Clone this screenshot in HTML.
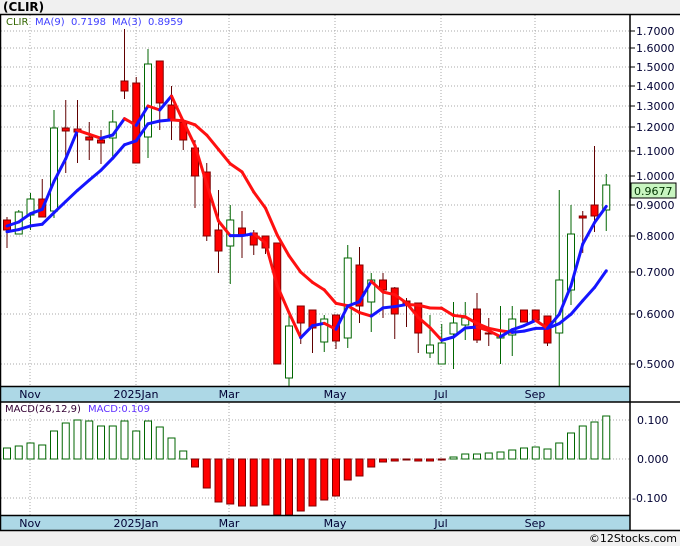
<!DOCTYPE html>
<html><head><meta charset="utf-8"><style>
html,body{margin:0;padding:0;background:#f0f0f0;}
body{width:680px;height:546px;overflow:hidden;position:relative;font-family:"DejaVu Sans","Liberation Sans",sans-serif;}
svg{position:absolute;left:0;top:0;}
</style></head><body>
<svg id="s" width="680" height="546" viewBox="0 0 680 546" xmlns="http://www.w3.org/2000/svg">
<rect x="0" y="14" width="680" height="517" fill="#fff"/>
<text x="3" y="11" font-family="DejaVu Sans,sans-serif" font-weight="bold" font-size="12" fill="#000">(CLIR)</text>
<g id="grid" stroke="#aaa" stroke-dasharray="1,2" stroke-width="1"></g>
<g id="cd"></g>
<g id="ma"></g>
<g id="mb"></g>
<rect x="1" y="387" width="629" height="15" fill="#add8e6"/>
<rect x="1" y="516" width="629" height="14" fill="#add8e6"/>
<g stroke="#000" stroke-width="1.5" fill="none">
<line x1="0" y1="14.5" x2="680" y2="14.5"/>
<line x1="0.5" y1="14" x2="0.5" y2="531"/>
<line x1="630" y1="14" x2="630" y2="531"/>
<line x1="0" y1="386.5" x2="630" y2="386.5"/>
<line x1="0" y1="402" x2="680" y2="402"/>
<line x1="0" y1="515.5" x2="630" y2="515.5"/>
<line x1="0" y1="530.5" x2="680" y2="530.5"/>
</g>
<g id="ax" font-size="11" fill="#000033" font-family="DejaVu Sans,sans-serif"></g>
<g font-size="10" font-family="DejaVu Sans,sans-serif">
<text x="6" y="25" fill="#336600">CLIR</text>
<text x="35" y="25" fill="#4040ff">MA(9)</text>
<text x="71" y="25" fill="#4040ff">0.7198</text>
<text x="112" y="25" fill="#4040ff">MA(3)</text>
<text x="148" y="25" fill="#4040ff">0.8959</text>
<text x="5" y="412" fill="#330033">MACD(26,12,9)</text>
<text x="88" y="412" fill="#6030ff">MACD:0.109</text>
</g>
<rect x="631" y="183" width="45" height="15" fill="#c8f5c0" stroke="#000"/>
<text x="634" y="195" font-size="11" fill="#003300" font-family="DejaVu Sans,sans-serif">0.9677</text>
<text x="677" y="542" font-size="11" text-anchor="end" fill="#000" font-family="DejaVu Sans,sans-serif">©12Stocks.com</text>
</svg>
<script>
var NS="http://www.w3.org/2000/svg";
function el(p,t,a){var e=document.createElementNS(NS,t);for(var k in a)e.setAttribute(k,a[k]);document.getElementById(p).appendChild(e);return e;}
var vx=[30,136,229,335,441,535];
vx.forEach(function(x){el('grid','line',{x1:x,y1:15,x2:x,y2:386});el('grid','line',{x1:x,y1:403,x2:x,y2:515});});
var py=[[1.7,31],[1.6,48],[1.5,67],[1.4,86],[1.3,106],[1.2,127],[1.1,151],[1.0,176],[0.9,205],[0.8,236],[0.7,272],[0.6,314],[0.5,364]];
py.forEach(function(p){el('grid','line',{x1:1,y1:p[1],x2:630,y2:p[1]});
 var t=el('ax','text',{x:636,y:p[1]+4});t.textContent=p[0].toFixed(4);
 el('ax','line',{x1:630,y1:p[1],x2:635,y2:p[1],stroke:'#000'});});
[[0.1,420],[0,459],[-0.1,498]].forEach(function(p){el('grid','line',{x1:1,y1:p[1],x2:630,y2:p[1]});
 var t=el('ax','text',{x:p[0]<0?632:637,y:p[1]+4});t.textContent=p[0].toFixed(3);});
var lab=[["Nov",30],["2025Jan",136],["Mar",229],["May",335],["Jul",441],["Sep",535]];
lab.forEach(function(l){[398,527].forEach(function(y){var t=el('ax','text',{x:l[1],y:y,'text-anchor':'middle'});t.textContent=l[0];});});
var C=[[220,230,217,248,0],[212,234,210,234,1],[199,215,193,230,1],[199,217,179,217,0],[128,211,110,218,1],[128,131,100,173,0],[129,132,100,163,0],[137,140,122,160,0],[140,143,130,164,0],[122,138,110,158,1],[81,91,29,99,0],[83,163,77,163,0],[64,137,49,158,1],[61,103,61,130,0],[105,121,86,140,0],[122,140,119,150,0],[148,176,140,208,0],[172,236,163,241,0],[230,251,190,273,0],[220,246,205,284,1],[228,236,211,258,0],[233,245,230,255,0],[236,248,236,254,0],[243,364,243,364,0],[326,378,310,386,1],[306,323,306,344,0],[310,328,310,353,0],[319,342,315,352,1],[315,341,315,349,0],[258,338,245,348,1],[265,306,247,323,0],[280,302,273,332,1],[280,290,273,318,0],[288,314,287,339,0],[301,305,298,327,0],[303,333,303,353,0],[345,353,315,358,1],[343,364,324,364,1],[323,334,302,369,1],[318,325,302,340,1],[309,340,293,343,0],[333,334,318,346,0],[336,338,306,364,1],[319,335,306,356,1],[310,322,310,322,0],[310,320,310,320,0],[316,343,316,346,0],[280,333,190,386,1],[234,290,205,305,1],[216,218,211,253,0],[205,216,146,232,0],[185,210,174,231,1]];
var X=function(i){return 7+11.75*i;};
C.forEach(function(c,i){var x=X(i);
 el('cd','line',{x1:x,y1:c[2],x2:x,y2:c[3],stroke:c[4]?'#006600':'#600000','stroke-width':1});
 var h=Math.max(1,c[1]-c[0]);
 el('cd','rect',{x:x-3.5,y:c[0],width:7,height:h,fill:c[4]?'#fff':'#ff0000',stroke:c[4]?'#006600':'#800000','stroke-width':1});});
var cl=C.map(function(c){return c[4]?c[0]:c[1];});
function ma(n,pad){var r=[];for(var i=0;i<cl.length;i++){var s=0;for(var j=i-n+1;j<=i;j++)s+=(j<0?pad:cl[j]);r.push(s/n);}return r;}
[ma(9,232),ma(3,224)].forEach(function(m){for(var i=1;i<m.length;i++){
 el('ma','line',{x1:X(i-1),y1:m[i-1],x2:X(i),y2:m[i],stroke:m[i]<=m[i-1]?'#1515ff':'#ff1010','stroke-width':3,'stroke-linecap':'round'});}});
var M=[448,446,443,445,431,423,420,421,426,426,421,431,421,427,438,451,467,488,502,504,506,506,505,515,515,511,506,500,496,480,476,467,462,461,460,461,461,460,457,454,454,453,452,450,448,447,449,443,433,426,422,416];
M.forEach(function(v,i){var x=X(i);var g=v<459;
 var y=g?v:459,h=Math.max(1,Math.abs(v-459));
 el('mb','rect',{x:x-3.5,y:y,width:7,height:h,fill:g?'#fff':'#ff0000',stroke:g?'#006600':'#800000','stroke-width':1});});
</script>
</body></html>
